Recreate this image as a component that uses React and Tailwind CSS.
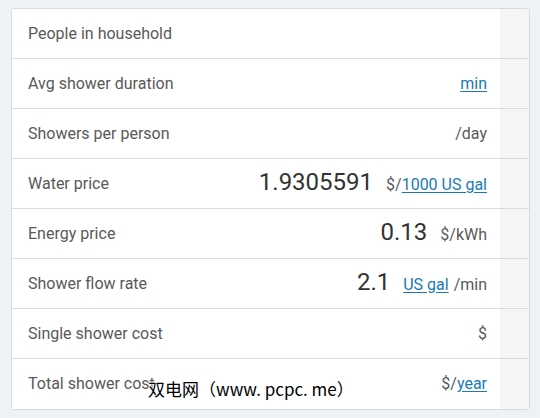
const rows = [
  { label: 'People in household' },
  { label: 'Avg shower duration', link: 'min' },
  { label: 'Showers per person', unit: '/day' },
  { label: 'Water price', value: '1.9305591', unit: '$/', link: '1000 US gal' },
  { label: 'Energy price', value: '0.13', unit: '$/kWh' },
  { label: 'Shower flow rate', value: '2.1', link: 'US gal', after: '/min' },
  { label: 'Single shower cost', unit: '$' },
  { label: 'Total shower cost', unit: '$/', link: 'year' },
];

const Row = ({ row, last }) => (
  <div className={`flex h-[50px] ${last ? '' : 'border-b border-[#dcdcdc]'}`}>
    <div className="flex flex-1 items-center justify-between bg-white pl-[16px] pr-[13px]">
      <span className="text-[16px] text-[#595959]">{row.label}</span>
      <div className="flex items-baseline">
        {row.value && (
          <span className="mr-[13px] text-[24px] leading-none text-[#333]">{row.value}</span>
        )}
        {row.unit && <span className="text-[16px] text-[#595959]">{row.unit}</span>}
        {row.link && (
          <a className="text-[16px] text-[#1a7ab5] underline underline-offset-2">{row.link}</a>
        )}
        {row.after && <span className="ml-[5px] text-[16px] text-[#595959]">{row.after}</span>}
      </div>
    </div>
    <div className="w-[29px] bg-[#f6f6f6]" />
  </div>
);

export default function App() {
  return (
    <div className="relative h-[418px] w-[540px] bg-[#eef1f5] pl-[11px] pr-[10px] pt-[8px] font-['Roboto',sans-serif]">
      <div className="overflow-hidden rounded-[3px] border border-[#d9dbdf] bg-white">
        {rows.map((r, i) => (
          <Row key={i} row={r} last={i === rows.length - 1} />
        ))}
      </div>
      <div className="absolute left-[148px] top-[376px] text-[17px] text-black font-['Noto_Sans_CJK_SC',sans-serif] [text-shadow:0_0_2px_#fff,0_0_2px_#fff,0_0_2px_#fff]">
        双电网（www. pcpc. me）
      </div>
    </div>
  );
}
